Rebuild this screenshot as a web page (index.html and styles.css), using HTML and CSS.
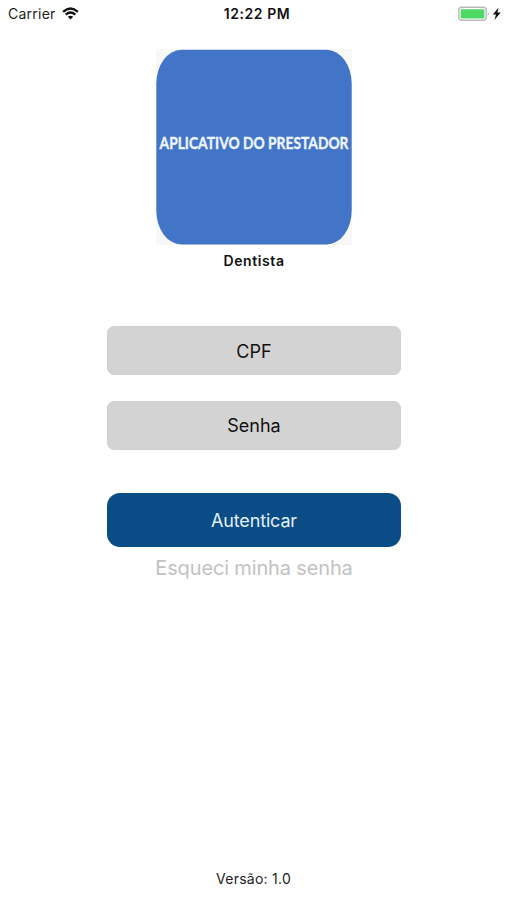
FILE: index.html
```html
<!DOCTYPE html>
<html lang="pt-BR">
<head>
  <meta charset="UTF-8" />
  <meta name="viewport" content="width=device-width, initial-scale=1.0"/>
  <title>Aplicativo do Prestador</title>
  <link rel="stylesheet" href="styles.css">
</head>
<body>
  <header class="status-bar">
    <div class="carrier">
      <span>Carrier</span>
      <svg class="wifi" viewBox="0 0 17 13">
        <path d="M1.1 4.8 Q8.5 -1.8 15.9 4.8" />
        <path d="M3.7 7.6 Q8.5 3.4 13.3 7.6" />
        <path class="wifi-dot" d="M5.8 9.7 Q8.5 7.6 11.2 9.7 L8.5 12.6 Z" />
      </svg>
    </div>
    <div class="clock">12:22 PM</div>
    <div class="battery">
      <svg width="43" height="16" viewBox="0 0 43 16">
        <rect x="0.8" y="1.3" width="27.4" height="13" rx="3" fill="#fff" stroke="#b9b9bb" stroke-width="1.4" />
        <rect x="2.6" y="3.2" width="23.8" height="9.2" rx="1.2" fill="#4cd964" />
        <path d="M29.8 5.6 Q31.6 7.8 29.8 10 Z" fill="#a8a8aa" />
        <path d="M40.6 1.6 L34.8 8.6 H38 L36.4 14 L42.8 6.6 H39.4 Z" fill="#111" />
      </svg>
    </div>
  </header>

  <main class="login">
    <div class="logo">
      <svg width="196" height="196" viewBox="0 0 196 196">
        <rect width="196" height="196" fill="#f8f8f9" />
        <rect x="0.3" y="0.8" width="195.4" height="194.6" rx="25" ry="34" fill="#4274c8" />
      </svg>
      <span class="logo-text">APLICATIVO DO PRESTADOR</span>
    </div>
    <h1>Dentista</h1>

    <form class="login-form">
      <input class="field" type="text" placeholder="CPF">
      <input class="field password" type="password" placeholder="Senha">
      <button class="submit" type="button">Autenticar</button>
      <a class="forgot">Esqueci minha senha</a>
    </form>
  </main>

  <footer class="version">Versão: 1.0</footer>
</body>
</html>
```
FILE: styles.css
```css
* {
  box-sizing: border-box;
}

body {
  margin: 0;
  height: 900px;
  background: #fff;
  color: #111;
  font-family: Inter, "Liberation Sans", sans-serif;
  display: flex;
  flex-direction: column;
  overflow: hidden;
}

.status-bar {
  height: 28px;
  padding: 0 6px 0 8px;
  display: grid;
  grid-template-columns: 1fr auto 1fr;
  align-items: center;
  font-size: 14px;
  line-height: 28px;
}

.carrier {
  display: flex;
  align-items: center;
  gap: 6px;
  color: #222;
  letter-spacing: 0.25px;
}

.wifi {
  width: 17px;
  height: 13px;
  margin-top: -2px;
  fill: none;
  stroke: #111;
  stroke-width: 2.3;
}

.wifi .wifi-dot {
  fill: #111;
  stroke: none;
}

.clock {
  font-weight: 600;
  letter-spacing: 0.55px;
  padding-left: 5px;
}

.battery {
  display: flex;
  justify-content: flex-end;
  margin-top: -1px;
}

.login {
  flex: 1;
  width: 294px;
  margin-left: 107px;
  padding-top: 21px;
  display: flex;
  flex-direction: column;
  align-items: center;
}

.logo {
  position: relative;
  width: 196px;
  height: 196px;
}

.logo svg {
  display: block;
}

.logo-text {
  position: absolute;
  top: 82px;
  left: 50%;
  color: #edf5ff;
  font-family: Lato, sans-serif;
  font-size: 17.5px;
  font-weight: 700;
  line-height: 24px;
  white-space: nowrap;
  -webkit-text-stroke: 0.4px #edf5ff;
  transform: translateX(-50%) scaleX(0.79);
}

h1 {
  margin: 6px 0 0;
  font-size: 14px;
  font-weight: 600;
  line-height: 20px;
  letter-spacing: 0.6px;
}

.login-form {
  width: 100%;
  margin-top: 55px;
  display: flex;
  flex-direction: column;
  align-items: center;
}

.field {
  width: 100%;
  height: 49px;
  margin-bottom: 26px;
  padding: 1px 0 0;
  border: 1px solid #d0d0d0;
  border-radius: 7px;
  background: #d3d3d3;
  font-family: inherit;
  font-size: 18px;
  text-align: center;
}

.field.password {
  padding: 0;
}

.field::placeholder {
  color: #111;
  opacity: 1;
}

.submit {
  width: 100%;
  height: 54px;
  margin-top: 17px;
  border: none;
  border-radius: 13px;
  background: #094c86;
  color: #e3f1ff;
  font-family: inherit;
  font-size: 18px;
  letter-spacing: -0.15px;
}

.forgot {
  margin-top: 9px;
  color: #c2c2c2;
  font-size: 20px;
  line-height: 24px;
  letter-spacing: -0.15px;
}

.version {
  height: 42px;
  text-align: center;
  font-size: 14px;
  line-height: 42px;
  letter-spacing: 0.25px;
  color: #222;
}
```
